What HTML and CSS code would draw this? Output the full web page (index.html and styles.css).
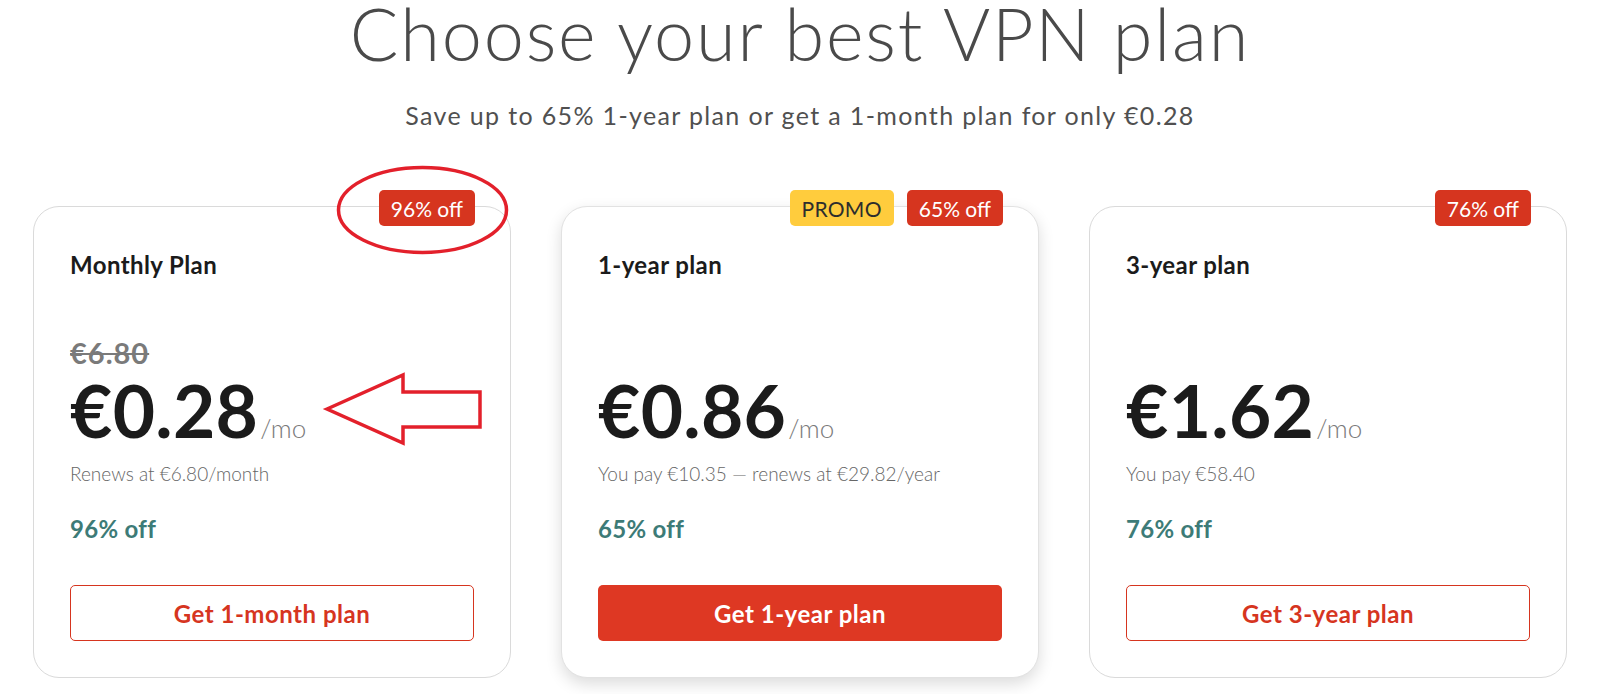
FILE: index.html
```html
<!DOCTYPE html>
<html lang="en">
<head>
<meta charset="utf-8">
<title>Choose your best VPN plan</title>
<link rel="stylesheet" href="styles.css">
</head>
<body>
<main class="page">
  <header class="intro">
    <h1 class="title">Choose your best VPN plan</h1>
    <p class="subtitle">Save up to 65% 1-year plan or get a 1-month plan for only €0.28</p>
  </header>

  <section class="plans">
    <article class="card">
      <div class="badges"><span class="badge badge-off">96% off</span></div>
      <h2 class="plan-name">Monthly Plan</h2>
      <div class="old-price"><s>€6.80</s></div>
      <div class="price"><span class="amount">€0.28</span><span class="per">/mo</span></div>
      <p class="note">Renews at €6.80/month</p>
      <p class="save">96% off</p>
      <a class="btn btn-outline" href="#">Get 1-month plan</a>
    </article>

    <article class="card card-featured">
      <div class="badges"><span class="badge badge-promo">PROMO</span><span class="badge badge-off">65% off</span></div>
      <h2 class="plan-name">1-year plan</h2>
      <div class="old-price"></div>
      <div class="price"><span class="amount">€0.86</span><span class="per">/mo</span></div>
      <p class="note">You pay €10.35 — renews at €29.82/year</p>
      <p class="save">65% off</p>
      <a class="btn btn-primary" href="#">Get 1-year plan</a>
    </article>

    <article class="card">
      <div class="badges"><span class="badge badge-off">76% off</span></div>
      <h2 class="plan-name">3-year plan</h2>
      <div class="old-price"></div>
      <div class="price"><span class="amount">€1.62</span><span class="per">/mo</span></div>
      <p class="note">You pay €58.40</p>
      <p class="save">76% off</p>
      <a class="btn btn-outline" href="#">Get 3-year plan</a>
    </article>
  </section>

  <svg class="annotation" width="1612" height="694" viewBox="0 0 1612 694" aria-hidden="true">
    <ellipse cx="422.5" cy="210" rx="84" ry="42.5" fill="none" stroke="#e3202b" stroke-width="3.5"/>
    <polygon points="327,409 403,375 403,392 480,392 480,427 403,427 403,443" fill="none" stroke="#e3202b" stroke-width="3.5" stroke-linejoin="miter"/>
  </svg>
</main>
</body>
</html>
```

FILE: styles.css
```css
* { box-sizing: border-box; }

html, body {
  margin: 0;
  padding: 0;
  background: #ffffff;
}

body {
  font-family: Lato, "Open Sans", "DejaVu Sans", sans-serif;
  color: #1b1b1b;
}

.page {
  position: relative;
  width: 1600px;
  height: 694px;
  overflow: hidden;
}

.intro {
  display: flex;
  flex-direction: column;
  align-items: center;
  padding-top: 5px;
}

.title {
  margin: 0;
  font-size: 72px;
  line-height: 56px;
  font-weight: 300;
  color: #4a4a4a;
  letter-spacing: 1.8px;
}

.subtitle {
  margin: 39px 0 0;
  font-size: 25px;
  line-height: 30px;
  font-weight: 400;
  color: #505050;
  letter-spacing: 1.35px;
}

.plans {
  display: flex;
  gap: 50px;
  width: 1534px;
  margin: 76px auto 0;
}

.card {
  position: relative;
  flex: 0 0 478px;
  height: 472px;
  padding: 44px 36px 0;
  border: 1px solid #dadada;
  border-radius: 26px;
  background: #fff;
  display: flex;
  flex-direction: column;
}

.card-featured {
  border-color: #e2e2e2;
  box-shadow: 0 6px 16px rgba(0, 0, 0, 0.14);
}

.badges {
  position: absolute;
  top: -17px;
  right: 35px;
  display: flex;
  gap: 13px;
}

.badge {
  display: inline-flex;
  align-items: center;
  justify-content: center;
  height: 36px;
  padding: 0 12px;
  border-radius: 5px;
  font-size: 21px;
  font-weight: 400;
}

.badge-off {
  background: #d6351f;
  color: #fff;
}

.badge-promo {
  background: #ffcc3d;
  color: #2d2d2d;
  letter-spacing: 0.3px;
}

.plan-name {
  margin: 0;
  font-size: 24px;
  line-height: 28px;
  font-weight: 700;
  color: #1b1b1b;
  letter-spacing: 0.4px;
}

.old-price {
  height: 34px;
  margin-top: 57px;
  font-size: 29px;
  line-height: 34px;
  font-weight: 700;
  color: #7a7a7a;
  letter-spacing: 1px;
}

.old-price s {
  text-decoration-thickness: 2px;
}

.price {
  display: flex;
  align-items: baseline;
  height: 62px;
  margin-top: 9px;
}

.amount {
  font-size: 73px;
  line-height: 62px;
  font-weight: 700;
  color: #1b1b1b;
  letter-spacing: 0.3px;
}

.per {
  font-size: 26px;
  line-height: 20px;
  font-weight: 300;
  color: #7a7a7a;
  margin-left: 2px;
}

.note {
  margin: 22px 0 0;
  font-size: 19px;
  line-height: 22px;
  font-weight: 300;
  color: #666;
}

.save {
  margin: 30px 0 0;
  font-size: 24px;
  line-height: 28px;
  font-weight: 700;
  color: #3d7b77;
  letter-spacing: 0.3px;
}

.btn {
  display: flex;
  align-items: center;
  justify-content: center;
  height: 56px;
  margin-top: 42px;
  border-radius: 5px;
  font-size: 24px;
  font-weight: 700;
  letter-spacing: 0.5px;
  text-decoration: none;
}

.btn-outline {
  border: 1px solid #d6351f;
  color: #d6351f;
  background: #fff;
}

.btn-primary {
  background: #de3823;
  color: #fff;
}

.annotation {
  position: absolute;
  left: 0;
  top: 0;
  pointer-events: none;
}
```
